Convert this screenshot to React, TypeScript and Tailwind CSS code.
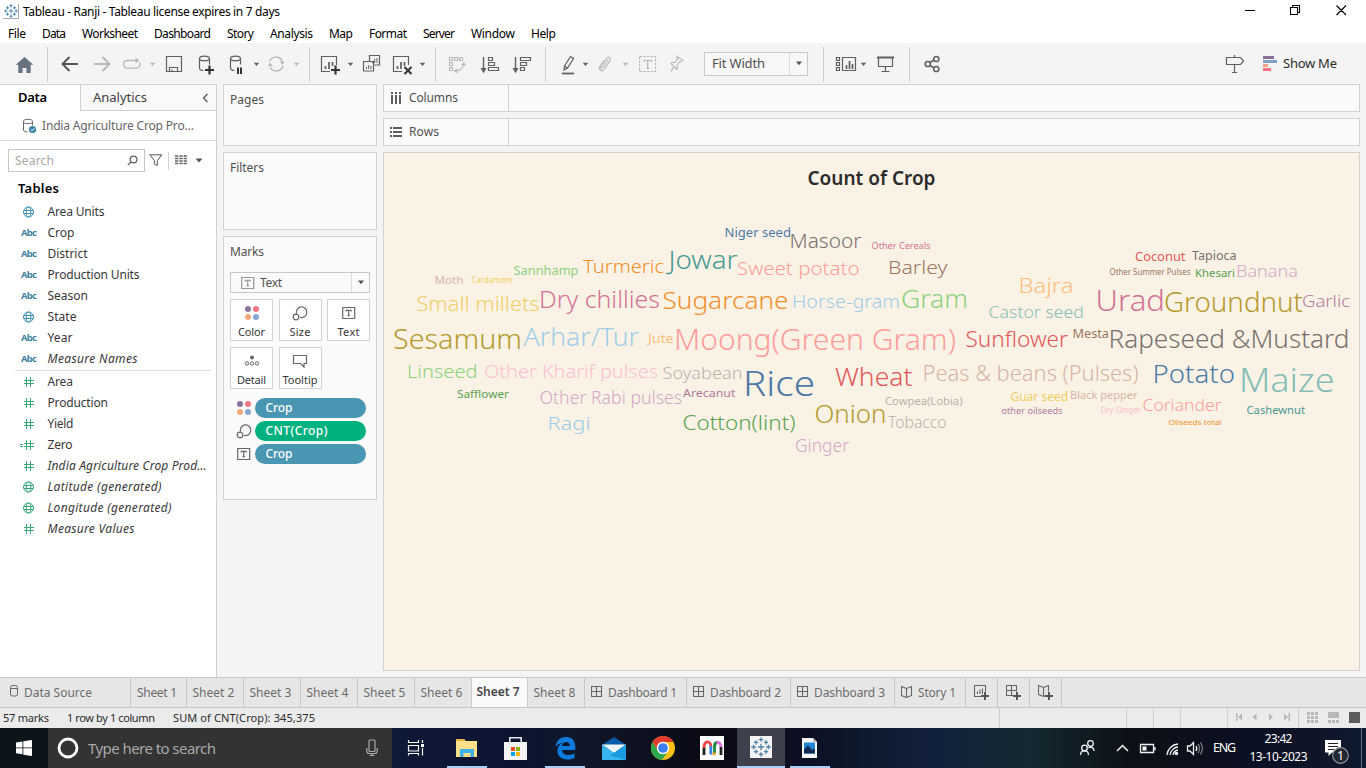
import { useLayoutEffect, useRef, type ReactNode } from "react";

/* Text run whose tracking is adjusted so that it spans a given width. */
function Fit({ w, c = "", children }: { w: number; c?: string; children: string }) {
  const ref = useRef<HTMLSpanElement>(null);
  useLayoutEffect(() => {
    const el = ref.current;
    if (!el) return;
    el.style.letterSpacing = "0px";
    el.style.marginRight = "0px";
    const natural = el.getBoundingClientRect().width;
    const ls = (w - natural) / Math.max(1, children.length - 1);
    el.style.letterSpacing = `${ls}px`;
    el.style.marginRight = `${-ls}px`;
  }, [w, children]);
  return (
    <span ref={ref} className={`inline-block shrink-0 whitespace-pre ${c}`}>
      {children}
    </span>
  );
}

/* Icon cell: the drawing uses the coordinates of the bar it sits in. */
function Cell({ x, w, y = 43, h = 41, children }: { x: number; w: number; y?: number; h?: number; children?: ReactNode }) {
  return (
    <svg width={w} height={h} viewBox={`${x} ${y} ${w} ${h}`} fill="none" stroke="#5f5f5f" strokeWidth="1.2" className="block shrink-0">
      {children}
    </svg>
  );
}

const Caret = ({ x, y = 64, f = "#5f5f5f" }: { x: number; y?: number; f?: string }) => (
  <path d={`M${x - 2.7} ${y - 1.3}h5.4l-2.7 3.2z`} fill={f} stroke="none" />
);
const Sep = ({ x }: { x: number }) => <path d={`M${x}.5 47v35`} stroke="#d0d0d0" strokeWidth="1" />;

function TableauMark({ c = "#3d7fa8", s = 14 }: { c?: string; s?: number }) {
  const pluses: [number, number, number][] = [
    [7, 7, 2.2], [7, 1.8, 1.6], [7, 12.2, 1.6], [1.8, 7, 1.6], [12.2, 7, 1.6],
    [3.5, 3.8, 1.5], [10.5, 3.8, 1.5], [3.5, 10.2, 1.5], [10.5, 10.2, 1.5],
  ];
  return (
    <svg width={s} height={s} viewBox="0 0 14 14" stroke={c} strokeWidth="0.9" className="block">
      {pluses.map(([x, y, r]) => (
        <path key={`${x}-${y}`} d={`M${x - r} ${y}h${2 * r}M${x} ${y - r}v${2 * r}`} />
      ))}
    </svg>
  );
}

const menu: [string, number][] = [
  ["File", 18], ["Data", 24], ["Worksheet", 56], ["Dashboard", 57], ["Story", 27], ["Analysis", 43],
  ["Map", 24], ["Format", 38], ["Server", 32], ["Window", 44], ["Help", 25],
];

function Toolbar() {
  const g = "#b9b9b9";
  return (
    <div className="flex h-[41px] items-center bg-[#f4f4f4]">
      <Cell x={0} w={54}>
        <path d="M24.5 57l8.8 7.8h-2.6V73h-4.3v-5h-3.8v5h-4.3v-8.200h-2.600z" fill="#687381" stroke="none" />
        <Sep x={47} />
      </Cell>
      <Cell x={54} w={33}><path d="M78 64H63M69.500 57l-7 7 7 7" strokeWidth="1.900" stroke="#555" /></Cell>
      <Cell x={87} w={30}><path d="M94 64h15M102.500 57l7 7-7 7" strokeWidth="1.900" stroke={g} /></Cell>
      <Cell x={117} w={43}>
        <path d="M132 60.500h-4.500a4 3.800 0 0 0 0 7.600h9a3.800 3.800 0 0 0 3.300-5.500M131 60.500h6" stroke={g} strokeWidth="1.400" />
        <path d="M135.500 57.500l4 3-4 3z" fill={g} stroke="none" />
        <Caret x={152.5} f={g} />
      </Cell>
      <Cell x={160} w={30}>
        <path d="M166.500 56.500h15v15h-15zM169.500 71.500v-4h8v4M172 69.500v2" />
      </Cell>
      <Cell x={190} w={32}>
        <ellipse cx="204.500" cy="58.500" rx="5" ry="2.300" />
        <path d="M199.500 58.500v9.500c0 1.500 1.500 2.500 4 2.500M209.500 58.500v6" />
        <path d="M209.500 65.500v9M205 70h9" stroke="#333" strokeWidth="2.200" />
      </Cell>
      <Cell x={222} w={40}>
        <ellipse cx="235.500" cy="58.500" rx="5" ry="2.300" />
        <path d="M230.500 58.500v9.500c0 1.500 1.500 2.500 4 2.500M240.500 58.500v6" />
        <path d="M238 67.500v6.500M241 67.500v6.500" stroke="#333" strokeWidth="2" />
        <Caret x={256.5} />
      </Cell>
      <Cell x={262} w={53}>
        <path d="M269.500 61.500a7 7 0 0 1 12.800-.5M283 66a7 7 0 0 1-13 1" stroke={g} strokeWidth="1.400" />
        <path d="M279.500 61.500h5l-1.800 3.500zM268 66h5l-3.500-3.500z" fill={g} stroke="none" />
        <Caret x={296.5} f={g} />
        <Sep x={309} />
      </Cell>
      <Cell x={315} w={42}>
        <path d="M330 71.500h-8.500v-15h15V65" />
        <path d="M325.500 69v-3M329 69v-7M332.500 66v-4" strokeWidth="1.700" />
        <path d="M335.500 65.500v9M331 70h9" stroke="#333" strokeWidth="2.200" />
        <Caret x={350.5} />
      </Cell>
      <Cell x={357} w={29}>
        <path d="M369.500 61v-5.500h10v9.500h-5M363.500 61.500h10v9.500h-10z" />
        <path d="M366.500 69v-2M368.700 69v-4M371 69v-3M372.500 63v-2M374.700 63v-4M377 63v-5" strokeWidth="1" />
      </Cell>
      <Cell x={386} w={55}>
        <path d="M402 71.500h-8.500v-15h15V65" />
        <path d="M397.500 69v-3M401 69v-7M404.500 66v-4" strokeWidth="1.700" />
        <path d="M404.500 67l7 7M411.500 67l-7 7" stroke="#333" strokeWidth="2" />
        <Caret x={422.5} />
        <Sep x={435} />
      </Cell>
      <Cell x={441} w={33}>
        <path d="M449.500 57.500h3v3h-3zM454.500 57.500h3v3h-3zM459.500 57.500h3v3h-3zM449.500 62.500h3v3h-3zM449.500 67.500h3v3h-3zM455 71c5 0 8-3 8.500-7" stroke={g} />
        <path d="M461 65l3-3 2 3.500zM457 68.500l-3.500 2.500 4 2.500z" fill={g} stroke="none" />
      </Cell>
      <Cell x={474} w={32}>
        <path d="M483.500 57v12" strokeWidth="1.400" />
        <path d="M481.500 68.500h4l-2 3.500z" fill="#5f5f5f" />
        <path d="M488.500 57.500h4v3h-4zM488.500 62.500h6v3h-6zM488.500 67.500h10v3h-10z" />
      </Cell>
      <Cell x={506} w={46}>
        <path d="M515.500 57v12" strokeWidth="1.400" />
        <path d="M513.500 68.500h4l-2 3.500z" fill="#5f5f5f" />
        <path d="M520.500 57.500h10v3h-10zM520.500 62.500h6v3h-6zM520.500 67.500h4v3h-4z" />
        <Sep x={545} />
      </Cell>
      <Cell x={552} w={41}>
        <path d="M564 70l.5-4 6-9.500 3 2-6 9.500zM564.500 66l3 2" />
        <path d="M562 73.500h12" strokeWidth="1.800" />
        <Caret x={585.5} />
      </Cell>
      <Cell x={593} w={39}>
        <path d="M608 60l-5 7.500c-1 1.500-3 .5-2-1l5.500-8c1.500-2.500 5-.5 3.500 2l-5.500 8.500c-2.500 3.500-6.500 1-4.500-2.500l4-6" stroke={g} />
        <Caret x={625.5} f={g} />
      </Cell>
      <Cell x={632} w={32}>
        <path d="M639.500 56.500h16v15h-16z" stroke={g} strokeDasharray="2.500 1.200" />
        <path d="M644 62v-1.500h7.500V62M647.700 60.500v8M646 68.500h3.500" stroke={g} />
      </Cell>
      <Cell x={664} w={40}>
        <path d="M677 56.500l6 4-1.500 1-2 .5-2.500 3.500.5 3-1 1-5.500-6 1-1 3 0 2.500-3.500zM674 66.500l-3 5" stroke={g} />
      </Cell>
      <div className="flex h-6 w-[104px] shrink-0 items-center border border-[#c9c9c9] bg-[#f7f7f7] text-[13px] text-[#505050]">
        <span className="flex w-[84px] pl-[7px]"><Fit w={53}>Fit Width</Fit></span>
        <span className="flex h-full w-[18px] items-center justify-center border-l border-[#dcdcdc]">
          <svg width="8" height="5"><path d="M1 .5h6L4 4.200z" fill="#555" /></svg>
        </span>
      </div>
      <Cell x={808} w={62}>
        <Sep x={823} />
        <path d="M836.500 57.500h3v3h-3zM836.500 62.500h3v3h-3zM836.500 67.500h3v3h-3zM842.500 57.500h13v13h-13z" />
        <path d="M846.500 69v-4M849.500 69v-8M852.500 69v-5" strokeWidth="1.700" />
        <Caret x={863.5} />
      </Cell>
      <Cell x={870} w={45}>
        <path d="M877 57.500h17" strokeWidth="2" />
        <path d="M878.500 58v8.500h14V58M885.500 66.500V72M881.500 71.500h8" />
        <Sep x={909} />
      </Cell>
      <Cell x={915} w={35}>
        <path d="M930 62.500l4-2.500M930 65.500l4 2.500" strokeWidth="1.500" />
        <g strokeWidth="1.500"><circle cx="927.700" cy="64" r="2.600" /><circle cx="936.300" cy="59" r="2.600" /><circle cx="936.300" cy="69" r="2.600" /></g>
      </Cell>
      <div className="flex-1" />
      <Cell x={1220} w={32}>
        <path d="M1226.500 57.500h14l3 3.500-3 3.500h-14zM1234.500 55v2.500M1234.500 64.500V72.500M1232 72.500h5" />
      </Cell>
      <Cell x={1252} w={31}>
        <g stroke="none">
          <path d="M1263 56h11v3h-11z" fill="#8a7299" /><path d="M1263 60h14v3h-14z" fill="#7ea2cc" />
          <path d="M1263 64h5v3h-5z" fill="#f3a57f" /><path d="M1263 68h8v3h-8z" fill="#f9707f" />
        </g>
      </Cell>
      <span className="flex w-[83px] shrink-0 text-[13px] text-[#2c2c2c]"><Fit w={54}>Show Me</Fit></span>
    </div>
  );
}

type Kind = "abc" | "globe" | "num" | "calc" | "gglobe";
type Field = [Kind, string, number, boolean?];
const dims: Field[] = [
  ["globe", "Area Units", 57], ["abc", "Crop", 27], ["abc", "District", 40], ["abc", "Production Units", 92],
  ["abc", "Season", 40.5], ["globe", "State", 29], ["abc", "Year", 25], ["abc", "Measure Names", 90, true],
];
const meas: Field[] = [
  ["num", "Area", 25.5], ["num", "Production", 60.5], ["num", "Yield", 26], ["calc", "Zero", 25],
  ["num", "India Agriculture Crop Prod…", 159, true], ["gglobe", "Latitude (generated)", 114, true],
  ["gglobe", "Longitude (generated)", 124, true], ["num", "Measure Values", 87, true],
];

function FieldIcon({ k }: { k: Kind }) {
  if (k === "abc") return <Fit w={16} c="ml-[21px] pt-px text-[9.5px] font-bold leading-[12px] text-[#4183a0]">Abc</Fit>;
  const c = k === "globe" ? "#3e8eae" : "#3aa87b";
  if (k === "globe" || k === "gglobe")
    return (
      <svg width="12" height="12" viewBox="0 0 12 12" fill="none" stroke={c} className="ml-[23px]">
        <circle cx="5.500" cy="6" r="5" /><ellipse cx="5.500" cy="6" rx="2.300" ry="5" /><path d="M1 4.500h9M1 7.500h9" />
      </svg>
    );
  return (
    <svg width="16" height="12" viewBox="0 0 16 12" fill="none" stroke={c} className="ml-[19px]">
      <path d="M7.500 1v10M11.500 1v10M5 4.500h10M5 7.500h10" />
      {k === "calc" && <path d="M1 5.500h3M1 7.500h3" />}
    </svg>
  );
}

const FieldRow = ({ f }: { f: Field }) => (
  <div className="flex h-[21px] shrink-0 items-center text-[12px] text-[#383838]">
    <span className="flex w-[47.500px] shrink-0"><FieldIcon k={f[0]} /></span>
    <Fit w={f[2]} c={f[3] ? "italic" : ""}>{f[1]}</Fit>
  </div>
);

function DataPane() {
  return (
    <div className="flex w-[217px] shrink-0 flex-col border-r border-[#d0d0d0] bg-white">
      <div className="flex h-[27px] shrink-0 border-t border-[#d4d4d4] text-[13px]">
        <div className="flex w-20 items-center pl-[18px] font-semibold text-black"><Fit w={29}>Data</Fit></div>
        <div className="flex flex-1 items-center border-b border-l border-[#d0d0d0] bg-[#f9f9f9] pl-[12px] text-[#404040]">
          <Fit w={54}>Analytics</Fit>
          <svg width="7" height="10" viewBox="0 0 7 10" fill="none" stroke="#555" strokeWidth="1.300" className="ml-[55px]"><path d="M5.500 1L1.500 5l4 4" /></svg>
        </div>
      </div>
      <div className="flex h-[30px] shrink-0 items-center border-b border-[#e0e0e0] text-[12px] text-[#666]">
        <svg width="16" height="16" viewBox="0 0 16 16" fill="none" stroke="#6a6a6a" className="ml-[22px] mr-1">
          <ellipse cx="6" cy="3.500" rx="4.500" ry="2.200" /><path d="M1.500 3.500v8.500c0 1.300 2 2 4 2M10.500 3.500v4" />
          <circle cx="10.500" cy="11.500" r="3.600" fill="#3e84a5" stroke="none" /><path d="M8.800 11.500l1.300 1.300 2.200-2.500" stroke="#fff" />
        </svg>
        <Fit w={152}>India Agriculture Crop Pro…</Fit>
      </div>
      <div className="mt-2 flex h-[23px] shrink-0 items-center pl-2">
        <div className="flex h-[23px] w-[137px] items-center justify-between border border-[#c6c6c6] pl-[6px] pr-[6px] text-[12px] text-[#a8a8a8]">
          <Fit w={39}>Search</Fit>
          <svg width="11" height="11" viewBox="0 0 11 11" fill="none" stroke="#5c5c5c" strokeWidth="1.200"><circle cx="6.500" cy="4.500" r="3.400" /><path d="M4 7L.8 10.200" /></svg>
        </div>
        <svg width="14" height="13" viewBox="0 0 14 13" fill="none" stroke="#555" className="ml-[4px]"><path d="M.8.800h12L8.300 6.500v5l-3-1.500v-3.500z" /></svg>
        <span className="ml-[5px] h-[18px] w-px bg-[#d5d5d5]" />
        <svg width="12" height="11" className="ml-[6px]"><path d="M0 1h12M0 3.500h12M0 6h12M0 8.500h12" stroke="#666" strokeWidth="1.300" strokeDasharray="3.300 1" /></svg>
        <svg width="8" height="5" className="ml-[8px]"><path d="M.5.500h7L4 4.500z" fill="#555" /></svg>
      </div>
      <div className="flex h-[29px] shrink-0 items-center pl-[18px] pt-[4px] text-[13px] font-semibold text-black"><Fit w={41}>Tables</Fit></div>
      {dims.map((f) => <FieldRow key={f[1]} f={f} />)}
      <div className="mt-px ml-[15px] h-px w-[195px] shrink-0 bg-[#dcdcdc]" />
      {meas.map((f) => <FieldRow key={f[1]} f={f} />)}
    </div>
  );
}

function ColorDots() {
  return (
    <svg width="16" height="16" viewBox="0 0 16 16" className="block">
      <circle cx="4" cy="4" r="3" fill="#8a7299" /><circle cx="12" cy="4" r="3" fill="#f97483" />
      <circle cx="4" cy="12" r="3" fill="#f3aa80" /><circle cx="12" cy="12" r="3" fill="#86a8d0" />
    </svg>
  );
}
const SizeIcon = () => (
  <svg width="16" height="16" viewBox="0 0 16 16" fill="none" stroke="#666" strokeWidth="1.200" className="block">
    <path d="M4.500 8.800A5.300 5.300 0 1 1 8 12.300" /><circle cx="4" cy="12" r="2.800" />
  </svg>
);
const TextIcon = ({ c = "#666" }: { c?: string }) => (
  <svg width="14" height="14" viewBox="0 0 14 14" fill="none" stroke={c} className="block">
    <path d="M.7 1.500h12v11H.7zM4.200 5.500v-1.200h5v1.200M6.700 4.300v5.200M5.500 9.700h2.400" strokeWidth="1.200" />
  </svg>
);

const MarkButton = ({ label, w, children }: { label: string; w: number; children: ReactNode }) => (
  <div className="flex h-[42px] w-[43px] flex-col items-center border border-[#d2d2d2] bg-white text-[11px] text-[#383838]">
    <span className="mt-[5px] flex h-4 items-center">{children}</span>
    <Fit w={w} c="mt-[3px] leading-[16px]">{label}</Fit>
  </div>
);

const Pill = ({ label, w, green, children }: { label: string; w: number; green?: boolean; children: ReactNode }) => (
  <div className="flex h-[23px] items-center">
    <span className="flex w-[25px] pl-[6px]"><span className="flex w-4 justify-center">{children}</span></span>
    <span className={`flex h-5 w-[111px] items-center rounded-full pl-[10.5px] text-[12px] font-medium text-white ${green ? "bg-[#00b180]" : "bg-[#4996b2]"}`}>
      <Fit w={w}>{label}</Fit>
    </span>
  </div>
);

function Cards() {
  const card = "flex flex-col border border-[#d2d2d2] bg-[#fafafa] pl-[6px] text-[12px] text-[#505050]";
  return (
    <div className="ml-[6px] flex w-[154px] shrink-0 flex-col gap-[6px]">
      <div className={`${card} h-[62px] pt-[6px]`}><Fit w={34} c="self-start">Pages</Fit></div>
      <div className={`${card} h-[78px] pt-[6px]`}><Fit w={34} c="self-start">Filters</Fit></div>
      <div className={`${card} h-[264px] pt-[6px]`}>
        <Fit w={34} c="self-start">Marks</Fit>
        <div className="mt-[11px] flex h-[21px] w-[140px] items-center border border-[#c8c8c8] text-[12px]">
          <span className="ml-[10px]"><TextIcon c="#999" /></span>
          <span className="ml-[5px] flex w-[91px]"><Fit w={22}>Text</Fit></span>
          <span className="flex h-full flex-1 items-center justify-center border-l border-[#dcdcdc]">
            <svg width="8" height="5"><path d="M1 .5h6L4 4.200z" fill="#555" /></svg>
          </span>
        </div>
        <div className="mt-[6px] grid w-[140px] grid-cols-[43px_43px_43px] gap-x-[5.500px] gap-y-[6px]">
          <MarkButton label="Color" w={27}><ColorDots /></MarkButton>
          <MarkButton label="Size" w={21}><SizeIcon /></MarkButton>
          <MarkButton label="Text" w={22}><TextIcon /></MarkButton>
          <MarkButton label="Detail" w={29}>
            <svg width="16" height="14" viewBox="0 0 16 14" fill="none" stroke="#666"><circle cx="8" cy="3.500" r="2" fill="#666" stroke="none" /><circle cx="3" cy="9.500" r="1.700" /><circle cx="8" cy="9.500" r="1.700" /><circle cx="13" cy="9.500" r="1.700" /></svg>
          </MarkButton>
          <MarkButton label="Tooltip" w={35}>
            <svg width="16" height="16" viewBox="0 0 16 16" fill="none" stroke="#666" strokeWidth="1.200"><path d="M1.500 2.500h13v8H12v3.500L8.500 10.500h-7z" /></svg>
          </MarkButton>
        </div>
        <div className="mt-[7px] flex flex-col">
          <Pill label="Crop" w={27}><ColorDots /></Pill>
          <Pill label="CNT(Crop)" w={62} green><SizeIcon /></Pill>
          <Pill label="Crop" w={27}><TextIcon /></Pill>
        </div>
      </div>
    </div>
  );
}

/* label, left, right, baseline, size, colour */
const words: [string, number, number, number, number, string][] = [
  ["Niger seed", 724.5, 791, 237, 12.5, "#4e79a7"], ["Masoor", 789.5, 861.5, 248, 20, "#79706e"],
  ["Jowar", 668.5, 737.5, 269, 25, "#499894"], ["Sweet potato", 737, 859.5, 275, 19, "#ff9d9a"],
  ["Turmeric", 583, 664, 273, 18.5, "#f28e2b"], ["Sannhamp", 513.5, 578.5, 275, 12.5, "#8cd17d"],
  ["Moth", 434.5, 463.5, 284, 11.5, "#d7b5a6"], ["Cardamom", 471.5, 512.5, 283, 8, "#f1ce63"],
  ["Small millets", 416.5, 539.5, 311, 19.5, "#f1ce63"], ["Dry chillies", 539, 660, 308, 23, "#d37295"],
  ["Sugarcane", 662.5, 788.5, 308.5, 24, "#f28e2b"], ["Horse-gram", 792, 900, 308, 18, "#a0cbe8"],
  ["Gram", 901, 968, 308, 25, "#8cd17d"], ["Sesamum", 393, 522, 349, 27, "#b6992d"],
  ["Arhar/Tur", 523.5, 639, 346, 25.5, "#a0cbe8"], ["Jute", 648, 673.5, 343, 12, "#ffbe7d"],
  ["Moong(Green Gram)", 674, 956, 350, 29.5, "#ff9d9a"], ["Linseed", 407, 477.5, 378, 18.5, "#8cd17d"],
  ["Other Kharif pulses", 484, 658, 378, 18.5, "#fabfd2"], ["Soyabean", 662.5, 742.5, 379, 17, "#bab0ac"],
  ["Rice", 743, 815, 396, 34.5, "#4e79a7"], ["Wheat", 835, 912.5, 386, 25.5, "#e15759"],
  ["Safflower", 457, 509, 398, 11.5, "#59a14f"], ["Other Rabi pulses", 539.5, 682, 404, 17.5, "#d4a6c8"],
  ["Arecanut", 683, 735.5, 397, 11.5, "#b07aa1"], ["Ragi", 547.5, 590.5, 430, 18.5, "#a0cbe8"],
  ["Cotton(lint)", 682.5, 795.5, 430, 20.5, "#59a14f"], ["Onion", 814.5, 886.5, 423, 25, "#b6992d"],
  ["Ginger", 795, 849, 452, 17.5, "#d4a6c8"], ["Other Cereals", 871.5, 930.5, 249, 9, "#d37295"],
  ["Barley", 888, 947.5, 274, 19, "#9d7660"], ["Bajra", 1018.5, 1073.5, 293, 20.5, "#ffbe7d"],
  ["Castor seed", 988.5, 1084, 318, 17, "#86bcb6"], ["Coconut", 1135, 1185.5, 261, 12.5, "#e15759"],
  ["Tapioca", 1192, 1236.5, 260, 12, "#79706e"], ["Other Summer Pulses", 1109.5, 1190.5, 275, 8, "#9d7660"],
  ["Khesari", 1195, 1235, 277, 11, "#59a14f"], ["Banana", 1236, 1298, 277, 16.5, "#d4a6c8"],
  ["Urad", 1095.5, 1165, 311, 29, "#d37295"], ["Groundnut", 1164, 1303, 312, 27, "#b6992d"],
  ["Garlic", 1302, 1350, 307, 17, "#b07aa1"], ["Sunflower", 965.5, 1068, 347, 21.5, "#e15759"],
  ["Mesta", 1072.5, 1109, 338, 12, "#9d7660"], ["Rapeseed &Mustard", 1108.5, 1349.5, 348, 26, "#79706e"],
  ["Peas & beans (Pulses)", 922.5, 1138.5, 380.5, 21.5, "#d7b5a6"], ["Potato", 1152.5, 1235, 383, 25.5, "#4e79a7"],
  ["Maize", 1239, 1334.5, 392, 32.5, "#86bcb6"], ["Cowpea(Lobia)", 885, 962.5, 405, 11.5, "#bab0ac"],
  ["Tobacco", 888, 946.5, 428, 15.5, "#bab0ac"], ["Guar seed", 1010.5, 1068, 401, 12, "#f1ce63"],
  ["other oilseeds", 1001.5, 1062.5, 414, 9.5, "#b07aa1"], ["Black pepper", 1070, 1137.5, 399, 11.5, "#d7b5a6"],
  ["Dry Ginger", 1100.5, 1141, 413, 8.5, "#fabfd2"], ["Coriander", 1142.5, 1221.5, 411, 17, "#ff9d9a"],
  ["Cashewnut", 1246.5, 1305, 414, 11.5, "#499894"], ["Oilseeds total", 1168.5, 1221.5, 425, 7.5, "#f28e2b"],
];

const Shelf = ({ label, w, icon }: { label: string; w: number; icon: string }) => (
  <div className="flex h-7 shrink-0 border border-[#d2d2d2] bg-[#fafafa]">
    <div className="flex w-[125px] items-center border-r border-[#d2d2d2] pl-[6px] text-[12px] text-[#505050]">
      <svg width="13" height="12" viewBox="0 0 13 12" fill="#5d5d5d" className="mb-px mr-[6px]"><path d={icon} /></svg>
      <Fit w={w}>{label}</Fit>
    </div>
  </div>
);

function View() {
  return (
    <div className="ml-[6px] flex w-[977px] shrink-0 flex-col gap-[6px]">
      <Shelf label="Columns" w={49} icon="M1 0h2v2h-2zM1 3h2v9h-2zM5 0h2v2h-2zM5 3h2v9h-2zM9 0h2v2h-2zM9 3h2v9h-2z" />
      <Shelf label="Rows" w={30} icon="M0 1h2v2h-2zM3 1h9v2h-9zM0 5h2v2h-2zM3 5h9v2h-9zM0 9h2v2h-2zM3 9h9v2h-9z" />
      <div className="flex h-[519px] flex-col border border-[#d2d2d2] bg-[#faf3e5]">
        <div className="flex h-[50px] items-center justify-center text-[19px] font-semibold text-[#2b2b2b]">
          <Fit w={128}>Count of Crop</Fit>
        </div>
        <svg width="975" height="467" viewBox="384 203 975 467" className="block">
          {words.map(([t, a, b, y, s, c]) => (
            <text key={t} x={a} y={y} fill={c} fontSize={s} textLength={b - a} fontWeight={s > 14 ? 300 : 400} lengthAdjust="spacingAndGlyphs">{t}</text>
          ))}
        </svg>
      </div>
    </div>
  );
}

const Grid = () => <path d="M.5.500h10v10H.5zM5.500.500v10M.5 5.500h10" />;
const Book = () => <path d="M5.500 2.500L.5.500v9l5 2 5-2v-9zM5.500 2.500v9" />;

function SheetTabs() {
  const tabs: [string, number, number, string?][] = [
    ["Sheet 1", 56, 40], ["Sheet 2", 57, 42], ["Sheet 3", 57, 42], ["Sheet 4", 57, 42], ["Sheet 5", 57, 42],
    ["Sheet 6", 57, 42], ["Sheet 7", 56, 43, "on"], ["Sheet 8", 57, 42], ["Dashboard 1", 102, 69, "d"],
    ["Dashboard 2", 104, 71, "d"], ["Dashboard 3", 104, 71, "d"], ["Story 1", 71, 38, "s"],
  ];
  return (
    <div className="flex h-[31px] shrink-0 border-y border-[#c9c9c9] bg-[#e6e6e6] text-[12px] text-[#6c6c6c]">
      <div className="flex w-[131px] items-center border-r border-[#c9c9c9] pl-[10px]">
        <svg width="9" height="12" viewBox="0 0 9 12" fill="none" stroke="#666" className="mr-[5px] -mt-[3px]"><rect x=".5" y=".5" width="7" height="10.500" rx="2" /><path d="M.5 3.500h7" /></svg>
        <Fit w={68}>Data Source</Fit>
      </div>
      {tabs.map(([t, w, tw, k]) => (
        <div key={t} className={`flex shrink-0 items-center justify-center border-r border-[#c9c9c9] pr-[3px] ${k === "on" ? "bg-[#fafafa] pb-px font-semibold text-[#444]" : ""}`} style={{ width: w }}>
          {(k === "d" || k === "s") && (
            <svg width="12" height="12" viewBox="0 0 12 12" fill="none" stroke="#666" strokeWidth="1.100" className="mr-[5px] -mt-px">{k === "d" ? <Grid /> : <Book />}</svg>
          )}
          <Fit w={tw}>{t}</Fit>
        </div>
      ))}
      {["n", "d", "s"].map((k) => (
        <div key={k} className="flex w-8 shrink-0 items-center justify-center border-r border-[#c9c9c9] pt-px">
          <svg width="16" height="16" viewBox="0 0 16 16" fill="none" stroke="#666" strokeWidth="1.100">
            {k === "n" ? <path d="M.5.500h11v11H.5zM3.500 9V6.500M6 9V4.500M8.500 9V3.500" /> : k === "d" ? <Grid /> : <Book />}
            <path d="M11 6.500v9M7 11h9" stroke="#e6e6e6" strokeWidth="4" />
            <path d="M11 7v8M7 11h8" stroke="#555" strokeWidth="2" />
          </svg>
        </div>
      ))}
    </div>
  );
}

function StatusBar() {
  return (
    <div className="flex h-5 shrink-0 items-center bg-[#ebebeb] text-[11px] text-[#2c2c2c]">
      <div className="flex h-full w-[1000px] items-center border-r border-[#cfcfcf] pl-[3px]">
        <Fit w={46}>57 marks</Fit>
        <Fit w={88} c="ml-[18px]">1 row by 1 column</Fit>
        <Fit w={142} c="ml-[18px]">SUM of CNT(Crop): 345,375</Fit>
      </div>
      <div className="h-full w-[127px] border-r border-[#cfcfcf]" />
      <div className="h-full w-[27px] border-r border-[#cfcfcf]" />
      <div className="h-full w-[27px] border-r border-[#cfcfcf]" />
      <div className="h-full w-[47px] border-r border-[#cfcfcf]" />
      <Cell x={1228} w={138} y={708} h={20}>
        <g fill="#b8b8b8" stroke="none">
          <path d="M1236 713h1.500v8h-1.500zM1242 713.500v7l-4-3.500zM1256.500 713.500v7l-4-3.500zM1269 713.500v7l4-3.500zM1284 713.500v7l4-3.500zM1288.500 713h1.500v8h-1.500z" />
          {[712, 716, 720].map((y) => [1307, 1311, 1315].map((x) => <rect key={`${x}-${y}`} x={x} y={y} width="3" height="3" />))}
          <path d="M1328 712h11v6h-11zM1328 720h3v3h-3zM1332 720h3v3h-3zM1336 720h3v3h-3z" />
          <path d="M1349 712h11v11h-11z" fill="#5c5c5c" />
        </g>
        <path d="M1298.500 708v20" stroke="#cfcfcf" />
      </Cell>
    </div>
  );
}

function Taskbar() {
  return (
    <div className="flex h-10 shrink-0 items-center bg-[linear-gradient(90deg,#0f1a38_28%,#0c1430_38%,#10182c_42%,#0a0a14_52%,#0c0f22_59%,#0e1c30_64%,#12203c_68%,#142932_75%,#0c1016_83%,#0b1024_92%,#10152a_97%,#0d1b30_100%)]">
      <div className="flex h-full w-12 items-center justify-center bg-[#0c1519]">
        <svg width="16" height="16" viewBox="0 0 16 16" fill="#fff"><path d="M0 2.500l6.500-1V7.500H0zM7.300 1.300L16 0v7.500H7.300zM0 8.300h6.500v6l-6.500-1zM7.300 8.300H16V16l-8.700-1.300z" /></svg>
      </div>
      <div className="flex h-full w-[344px] items-center bg-[#333] text-[15px] text-[#a8a8a8]">
        <svg width="22" height="22" viewBox="0 0 22 22" className="ml-[9px] mr-[9px]"><circle cx="11" cy="11" r="9" fill="none" stroke="#fff" strokeWidth="2.800" /></svg>
        <Fit w={128}>Type here to search</Fit>
        <svg width="12" height="18" viewBox="0 0 12 18" fill="none" stroke="#aaa" strokeWidth="1.200" className="ml-[150px]"><rect x="3" y="1" width="6" height="11.500" rx="1" /><path d="M.8 9v3q0 2.500 2.500 2.500h5.400q2.500 0 2.500-2.500V9M6 14.500v2.500M3.500 16.500h5" /></svg>
      </div>
      <Cell x={392} w={345} y={728} h={40}>
        <path d="M408.500 740v2.500h10V740M408.500 745.500h10v5.500h-10zM408.500 755.500v-2h10v2M422.500 740v3M422.500 748v7.500" stroke="#fff" strokeWidth="1.200" /><rect x="421" y="744" width="3" height="3" fill="#fff" stroke="none" />
        <g stroke="none">
          <path d="M456 739h8l2 2h11v16h-21z" fill="#ffe08a" /><path d="M456 739h8l1 2h-9z" fill="#e9b53c" />
          <path d="M460 749h14v8h-3.500v-4h-7v4h-3.500z" fill="#3fb0ea" />
          <path d="M447 766h40v2h-40zM545 766h40v2h-40z" fill="#a9cdf5" />
          <path d="M504 742h23v18h-23z" fill="#f4f4f4" />
          <path d="M511 747h4v4h-4z" fill="#f25022" /><path d="M516 747h4v4h-4z" fill="#7fba00" /><path d="M511 752h4v4h-4z" fill="#00a4ef" /><path d="M516 752h4v4h-4z" fill="#ffb900" />
        </g>
        <path d="M509.800 744v-6.200h11.400V744" stroke="#e4e4e4" strokeWidth="1.600" />
        <g stroke="none">
          <path d="M555.500 747c1-7 5-10 10.500-10 6 0 9.500 4 9.300 10v3H562c.3 3.500 3 5 6.500 5 2.500 0 4.500-.7 6-1.700v4.400c-2 1.200-4.500 1.800-7.500 1.800-6 0-9.500-3.500-9.500-9 0-3.500 2-6.500 5.500-8-3 .5-5.500 2-7.500 4.500zM562.200 746h7.500c0-2.500-1.200-4-3.500-4s-3.700 1.500-4 4z" fill="#0e7bdc" />
          <path d="M602 745l12-8 12 8v14h-24z" fill="#0a5ca8" /><path d="M602 744.500h24L614 753z" fill="#eef5fb" /><path d="M602 744.500l12 8.500 12 7h-24z" fill="#38b6ef" /><path d="M626 744.500L614 753l-4 2.500 16 4.500z" fill="#1a9ae0" />
          <circle cx="663" cy="748" r="12" fill="#fbc116" />
          <path d="M652.600 742a12 12 0 0 1 20.800 0H663a6 6 0 0 0-5.200 9z" fill="#e33b2e" />
          <path d="M652.600 742a12 12 0 0 0 9.400 18l6.200-9a6 6 0 0 1-10.400 0z" fill="#2da94f" />
          <circle cx="663" cy="748" r="6.200" fill="#fff" /><circle cx="663" cy="748" r="4.800" fill="#3b7ded" />
          <path d="M700 736h24v24h-24z" fill="#fff" />
        </g>
        <g strokeWidth="2.800">
          <path d="M704 755v-8" stroke="#222" /><path d="M704 748c0-8 7-8 7-1" stroke="#f04545" />
          <path d="M710.800 746v8.500" stroke="#3a82ee" /><path d="M714.500 753.500v-7c0-2.500 1-4 3-4" stroke="#1c8a3c" />
          <path d="M716.500 742.300c3-.3 4.500 1.700 4.500 5" stroke="#e070e8" /><path d="M721 747v8" stroke="#222" />
          <path d="M712.500 753.800h3" stroke="#f0a020" />
        </g>
      </Cell>
      <div className="flex h-full w-12 flex-col items-center border-b-2 border-[#a9cdf5] bg-[#3f404e] pt-2">
        <span className="flex h-[22px] w-[22px] items-center justify-center bg-[#f4f4f4]"><TableauMark s={20} c="#4f84a8" /></span>
      </div>
      <Cell x={785} w={50} y={728} h={40}>
        <g stroke="none"><path d="M790 766h40v2h-40z" fill="#a9cdf5" /><path d="M802 738h11l4 4v16h-15z" fill="#f5f5f5" /><path d="M804 742.500h11v11h-11z" fill="#1e86d8" /><path d="M804 753.500v-4l4-4 4 4.500 1.500-1.500 1.500 1.500v3.500z" fill="#0f2a50" /><path d="M813 738v4h4z" fill="#bbb" /></g>
      </Cell>
      <div className="flex-1" />
      <Cell x={1070} w={143} y={728} h={40}>
        <g stroke="#f2f2f2" strokeWidth="1.300">
          <circle cx="1084.500" cy="748" r="2.800" /><path d="M1080.500 755c0-5.500 8-5.500 8 0" /><circle cx="1090.500" cy="743.500" r="2.800" /><path d="M1088.500 748c3-2 5.500 0 5.500 3" />
          <path d="M1117 751l5.500-5.500 5.500 5.500" strokeWidth="1.500" />
          <path d="M1140.500 744.500h13v8h-13zM1155 747v3.500" /><path d="M1142.500 746.500h4v4h-4z" fill="#fff" stroke="none" />
          <path d="M1167 755a12 12 0 0 1 11-11M1170 755a9 9 0 0 1 8-8M1173 755a6 6 0 0 1 5-5" /><circle cx="1176.500" cy="753.500" r="1.700" fill="#fff" stroke="none" />
          <path d="M1187.500 746h2.500l3.500-3.500v12L1190 751h-2.500zM1196 746c1 1.500 1 3.500 0 5" /><path d="M1198 744c2 2.500 2 6.500 0 9M1200.500 742.500c2.500 3.500 2.500 8.500 0 12" stroke="#777" />
        </g>
      </Cell>
      <span className="flex w-[37px] text-[12.500px] text-white"><Fit w={23}>ENG</Fit></span>
      <div className="flex w-[57px] flex-col items-center text-[12px] leading-[18px] text-white">
        <Fit w={28}>23:42</Fit>
        <Fit w={58}>13-10-2023</Fit>
      </div>
      <Cell x={1307} w={59} y={728} h={40}>
        <path d="M1325 740h16v12.500h-9l-3.500 3.500v-3.500h-3.500z" fill="#fff" stroke="none" /><path d="M1328 743.500h10M1328 746.500h10M1328 749.500h6" stroke="#222" />
        <circle cx="1340.500" cy="755.500" r="7.800" fill="#222831" stroke="#8a8f96" />
        <text x="1337" y="760" fontSize="12.500" fill="#fff" stroke="none">1</text>
        <path d="M1361.500 728v40" stroke="#5c6573" />
      </Cell>
    </div>
  );
}

export default function App() {
  return (
    <div className="flex h-[768px] w-[1366px] flex-col overflow-hidden bg-[#f4f4f4] font-['Noto_Sans',sans-serif]">
      <div className="flex h-[23px] shrink-0 items-center bg-white text-[12px] text-black">
        <span className="ml-[3px] mr-[4px] flex h-[15px] w-[16px] items-center justify-center border-b border-r border-[#aaa]"><TableauMark /></span>
        <Fit w={257}>Tableau - Ranji - Tableau license expires in 7 days</Fit>
        <div className="flex-1" />
        <Cell x={1240} w={126} y={0} h={23}>
          <path d="M1245 10.500h10M1290.500 7.500h7v7h-7zM1292.500 7.500v-2h7v7h-2M1336.500 5.500l9.500 9.500M1346 5.500l-9.500 9.500" stroke="#000" strokeWidth="1.100" />
        </Cell>
      </div>
      <div className="flex h-5 shrink-0 items-center gap-4 bg-white pl-2 pt-[2px] text-[12px] text-black">
        {menu.map(([t, w]) => <Fit key={t} w={w}>{t}</Fit>)}
      </div>
      <Toolbar />
      <div className="flex h-[593px] shrink-0">
        <DataPane />
        <Cards />
        <View />
      </div>
      <SheetTabs />
      <StatusBar />
      <Taskbar />
    </div>
  );
}
